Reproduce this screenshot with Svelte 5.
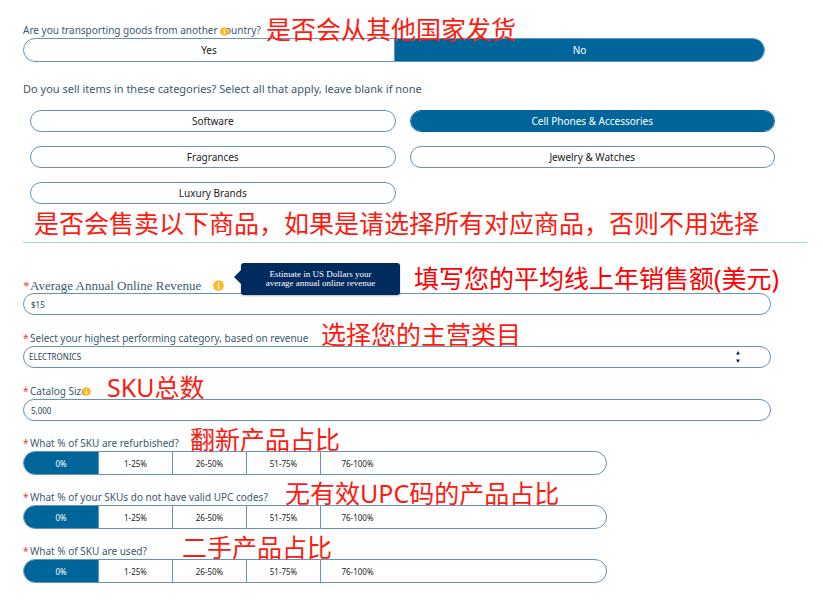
<script>
  const categories = [
    'Software',
    'Cell Phones & Accessories',
    'Fragrances',
    'Jewelry & Watches',
    'Luxury Brands'
  ];
  let chosen = $state(['Cell Phones & Accessories']);
  let transporting = $state('No');
  let revenue = $state('$15');
  let category = $state('ELECTRONICS');
  let catalogSize = $state('5,000');

  const ranges = ['0%', '1-25%', '26-50%', '51-75%', '76-100%'];
  let shares = $state([
    { id: 'refurbished', label: 'What % of SKU are refurbished?', note: '翻新产品占比', left: 167, value: '0%' },
    { id: 'upc', label: 'What % of your SKUs do not have valid UPC codes?', note: '无有效UPC码的产品占比', left: 262, value: '0%' },
    { id: 'used', label: 'What % of SKU are used?', note: '二手产品占比', left: 159, value: '0%' }
  ]);
</script>

{#snippet info()}
  <svg viewBox="0 0 12 12" aria-hidden="true">
    <circle cx="6" cy="6" r="5.8" fill="#fbb829" />
    <circle cx="6" cy="3.4" r="0.9" fill="#fff" />
    <path d="M4.8 5.1h1.9v3.3h.7v.8H4.7v-.8h.7V5.9h-.6z" fill="#fff" />
  </svg>
{/snippet}

<main>
  <fieldset class="field transport">
    <legend class="row">
      Are you transporting goods from another country?
      <span class="info over-text">{@render info()}</span>
      <span class="note low" style:left="243px">是否会从其他国家发货</span>
    </legend>
    <div class="segments halves">
      {#each ['Yes', 'No'] as option}
        <label class="segment">
          <input type="radio" name="transporting" value={option} bind:group={transporting} />
          <span>{option}</span>
        </label>
      {/each}
    </div>
  </fieldset>

  <fieldset class="categories">
    <legend>Do you sell items in these categories? Select all that apply, leave blank if none</legend>
    <div class="grid">
      {#each categories as name}
        <label class="pill">
          <input type="checkbox" value={name} bind:group={chosen} />
          <span>{name}</span>
        </label>
      {/each}
    </div>
  </fieldset>
  <p class="hint">是否会售卖以下商品，如果是请选择所有对应商品，否则不用选择</p>

  <div class="fields">
    <div class="field">
      <div class="row serif">
        <span class="star">*</span>
        <label for="revenue">Average Annual Online Revenue</label>
        <span class="info large">{@render info()}</span>
        <div class="tooltip" role="tooltip">Estimate in US Dollars your average annual online revenue</div>
        <span class="note high" style:left="391px">填写您的平均线上年销售额(美元)</span>
      </div>
      <input class="box" id="revenue" type="text" bind:value={revenue} />
    </div>

    <div class="field">
      <div class="row">
        <span class="star">*</span>
        <label for="category">Select your highest performing category, based on revenue</label>
        <span class="note" style:left="298px">选择您的主营类目</span>
      </div>
      <div class="select">
        <select class="box" id="category" bind:value={category}>
          <option>ELECTRONICS</option>
        </select>
        <svg viewBox="0 0 6 14" aria-hidden="true">
          <path d="M3 1l2 3.4H1zM3 13l2-3.4H1z" fill="#0b2f66" />
        </svg>
      </div>
    </div>

    <div class="field">
      <div class="row">
        <span class="star">*</span>
        <label for="catalog">Catalog Size</label>
        <span class="info overlap">{@render info()}</span>
        <span class="note" style:left="84px">SKU总数</span>
      </div>
      <input class="box" id="catalog" type="text" bind:value={catalogSize} />
    </div>
  </div>

  <div class="shares">
    {#each shares as share}
      <fieldset class="field">
        <legend class="row">
          <span class="star">*</span>
          {share.label}
          <span class="note" style:left="{share.left}px">{share.note}</span>
        </legend>
        <div class="segments">
          {#each ranges as range}
            <label class="segment">
              <input type="radio" name={share.id} value={range} bind:group={share.value} />
              <span>{range}</span>
            </label>
          {/each}
        </div>
      </fieldset>
    {/each}
  </div>
</main>

<style>
  :global(body) {
    margin: 0;
    background: #fff;
  }
  main {
    padding: 23px 16px 24px 23px;
    font: 10px/15px 'Noto Sans', 'Noto Sans CJK SC', sans-serif;
    color: #3b5970;
  }
  fieldset {
    margin: 0;
    padding: 0;
    border: 0;
    min-width: 0;
  }
  legend {
    padding: 0;
  }
  .field {
    position: relative;
  }
  .row {
    display: flex;
    align-items: center;
    height: 15px;
    white-space: nowrap;
  }
  .star {
    width: 7px;
    color: #ee3b3b;
  }
  .serif {
    font: 13px/15px 'Liberation Serif', serif;
  }
  .note {
    position: absolute;
    top: -15px;
    z-index: 1;
    font: 25px/36px 'Noto Sans', 'Noto Sans CJK SC', sans-serif;
    color: #ff1a10;
    white-space: nowrap;
    pointer-events: none;
  }
  .low {
    top: -12px;
  }
  .high {
    top: -18px;
    color: #ff0000;
  }
  .info svg {
    display: block;
    width: 9px;
    height: 9px;
  }
  .info.large {
    margin-left: 12px;
  }
  .info.large svg {
    width: 11px;
    height: 11px;
  }
  .over-text {
    position: absolute;
    top: 4px;
    left: 197px;
  }
  .overlap {
    margin-left: -5px;
  }

  .transport {
    margin-right: 42px;
  }
  .segments {
    display: flex;
    box-sizing: border-box;
    height: 24px;
    overflow: hidden;
    border: 1px solid #6593b9;
    border-radius: 12px;
  }
  .segment {
    position: relative;
    display: flex;
    flex: 0 0 74px;
    font-size: 8px;
    color: #222;
  }
  .segment + .segment::before {
    content: '';
    width: 1px;
    background: #6593b9;
  }
  .halves .segment {
    flex: 1;
    font-size: 10px;
  }
  .segment input,
  .pill input {
    position: absolute;
    inset: 0;
    width: 100%;
    height: 100%;
    margin: 0;
    opacity: 0;
    cursor: pointer;
  }
  .segment span,
  .pill span {
    display: flex;
    flex: 1;
    align-items: center;
    justify-content: center;
  }
  .segment input:checked + span,
  .pill input:checked + span {
    background: #006699;
    color: #fff;
  }

  .categories {
    margin-top: 19px;
  }
  .categories legend {
    font-size: 11px;
    line-height: 16px;
  }
  .grid {
    display: grid;
    grid-template-columns: 1fr 1fr;
    gap: 14px;
    padding: 13px 32px 0 7px;
  }
  .pill {
    position: relative;
    display: flex;
    box-sizing: border-box;
    height: 22px;
    overflow: hidden;
    border: 1px solid #6593b9;
    border-radius: 11px;
    color: #222;
  }
  .pill:has(:checked) {
    border-color: #006699;
    background: #006699;
  }
  .hint {
    margin: 0;
    padding: 0 0 2px 11px;
    border-bottom: 1px solid #a6d3e6;
    font: 25px/36px 'Noto Sans CJK SC', sans-serif;
    color: #ff1a10;
    white-space: nowrap;
  }

  .fields {
    display: flex;
    flex-direction: column;
    gap: 16px;
    margin: 35px 36px 0 0;
  }
  .box {
    display: block;
    box-sizing: border-box;
    width: 100%;
    height: 22px;
    padding: 0 7px;
    border: 1px solid #6593b9;
    border-radius: 11px;
    background: #fff;
    font: 8px/12px 'Noto Sans', sans-serif;
    color: #26415e;
  }
  .select {
    position: relative;
  }
  .select .box {
    appearance: none;
    padding: 0 5px;
  }
  .select svg {
    position: absolute;
    top: 4px;
    right: 30px;
    width: 6px;
    height: 14px;
    pointer-events: none;
  }
  .tooltip {
    position: absolute;
    top: -15px;
    left: 218px;
    z-index: 1;
    box-sizing: border-box;
    width: 159px;
    padding: 7px 16px;
    border-radius: 3px;
    background: #002b5f;
    box-shadow: 0 1px 2px #0004;
    font: 9px/9px 'Liberation Serif', serif;
    color: #fff;
    text-align: center;
    white-space: normal;
  }
  .tooltip::before {
    content: '';
    position: absolute;
    top: 7px;
    left: -7px;
    border: 7px solid transparent;
    border-left: 0;
    border-right-color: #002b5f;
  }

  .shares {
    display: flex;
    flex-direction: column;
    gap: 15px;
    max-width: 584px;
    margin-top: 15px;
  }
</style>
